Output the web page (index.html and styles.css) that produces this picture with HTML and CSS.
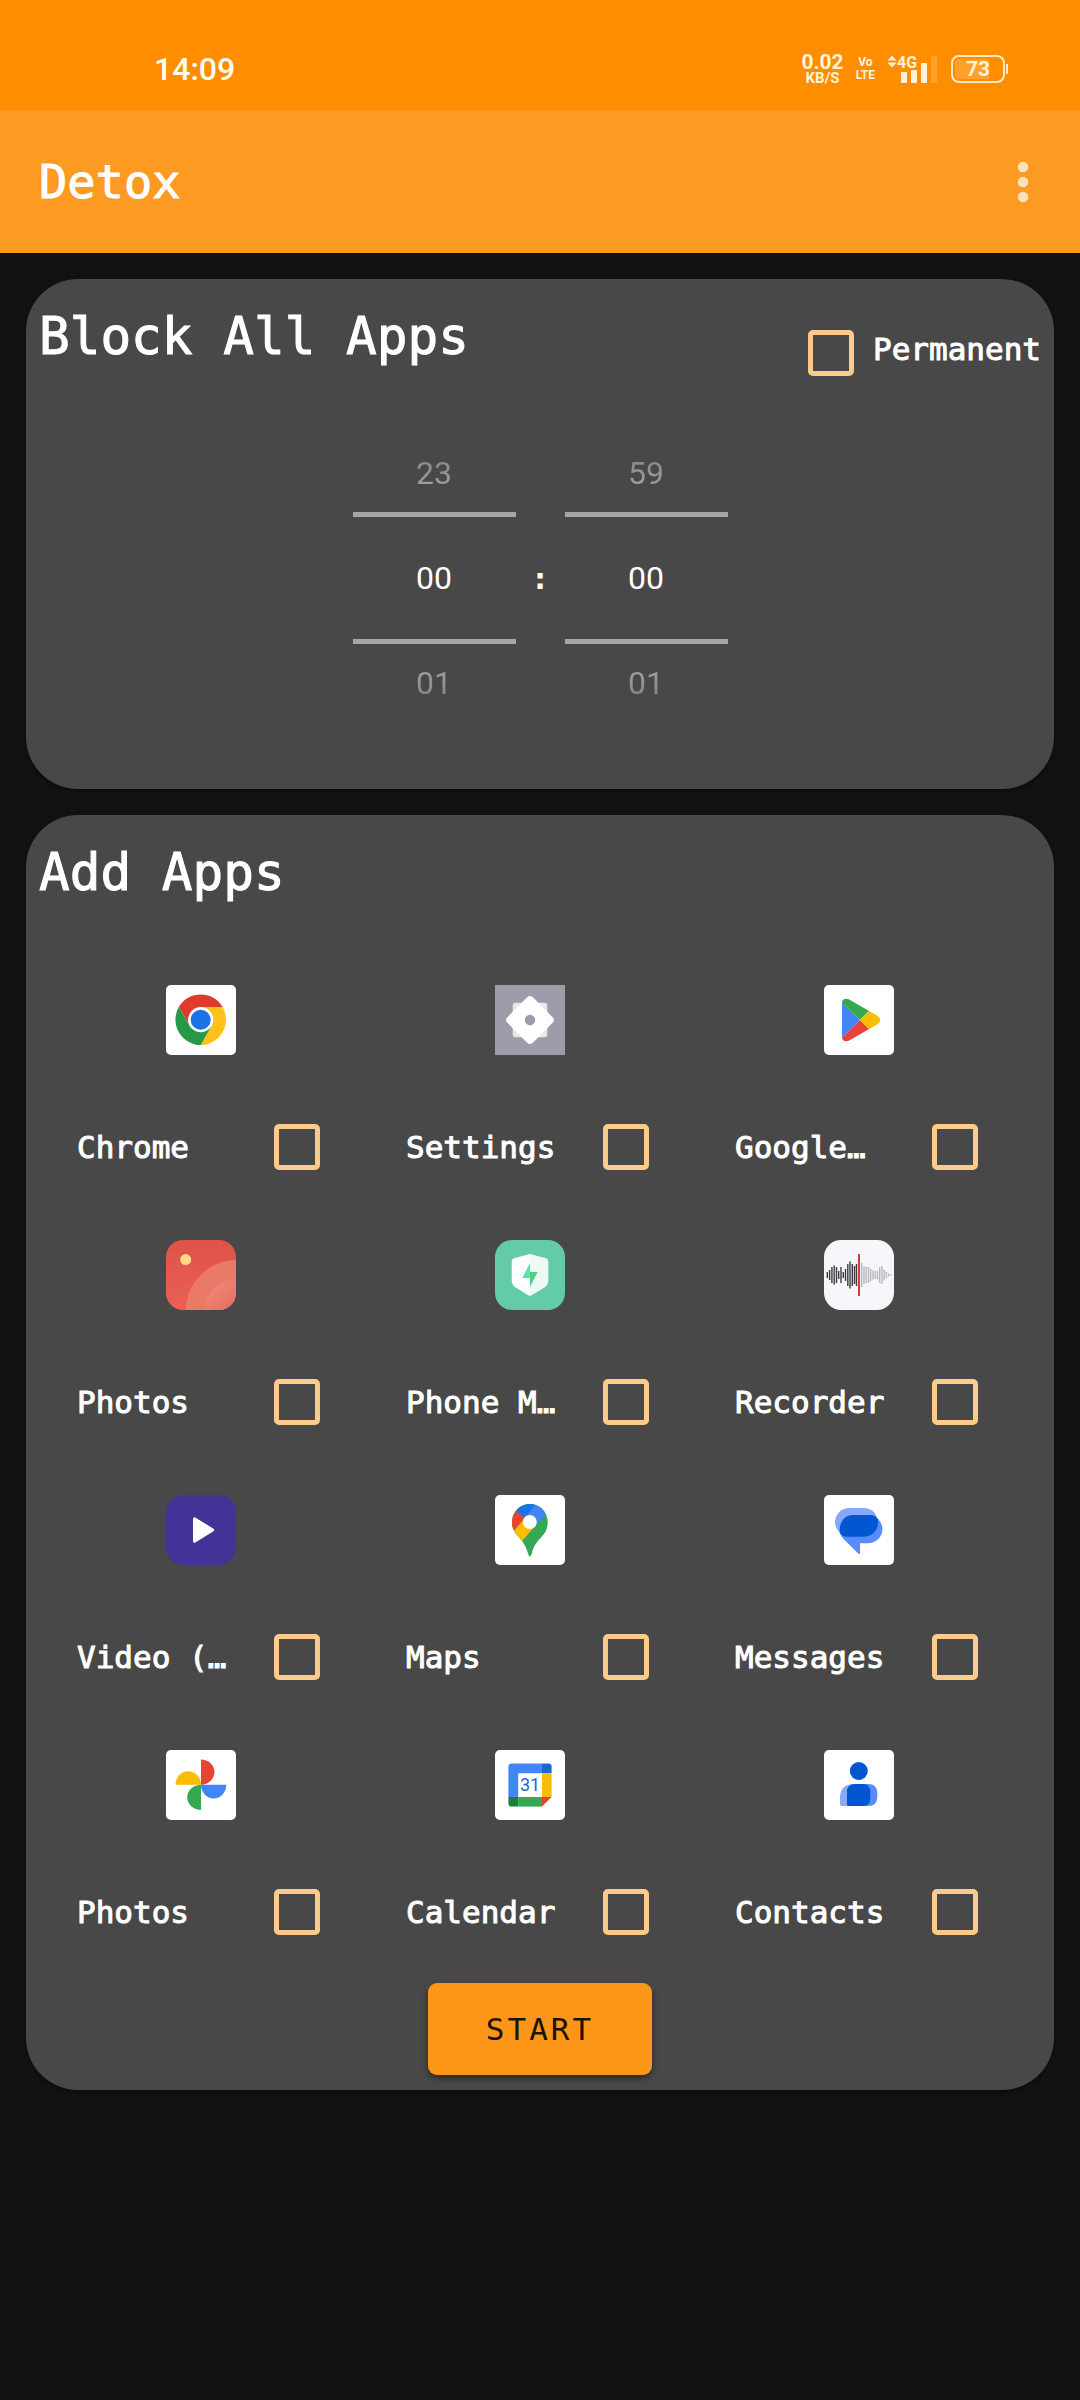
FILE: index.html
```html
<!DOCTYPE html>
<html lang="en">
<head>
<meta charset="utf-8">
<meta name="viewport" content="width=device-width, initial-scale=1">
<title>Detox</title>
<link rel="stylesheet" href="styles.css">
</head>
<body>
<div class="status-bar">
  <span class="clock">14:09</span>
  <div class="status-icons">
    <div class="net-speed"><span class="speed-value">0.02</span><span class="speed-unit">KB/S</span></div>
    <div class="volte"><span>Vo</span><span>LTE</span></div>
    <svg class="signal" viewBox="0 0 52 34" aria-label="4G signal">
      <path fill="currentColor" d="M5 3.500L9.500 8.500H.5zM5 15.500L.5 10.500H9.500z"/>
      <text class="signal-text" x="10" y="16">4G</text>
      <g fill="currentColor"><rect x="14" y="20" width="6" height="11" rx="1"/><rect x="24" y="18" width="6" height="13" rx="1"/><rect x="34" y="11" width="6" height="20" rx="1"/><rect x="44" y="4" width="6" height="27" rx="1" opacity=".2"/></g>
    </svg>
    <div class="battery"><span class="battery-level">73</span></div>
  </div>
</div>

<header class="toolbar">
  <h1 class="toolbar-title">Detox</h1>
  <button class="menu-button" type="button" aria-label="More options">
    <svg class="menu-dots" viewBox="0 0 12 42"><circle cx="6" cy="6" r="5.300"/><circle cx="6" cy="21" r="5.300"/><circle cx="6" cy="36" r="5.300"/></svg>
  </button>
</header>

<main class="content">
  <section class="card block-card">
    <div class="card-head">
      <h2 class="card-title">Block All Apps</h2>
      <label class="permanent"><input class="check" type="checkbox"><span class="label-text">Permanent</span></label>
    </div>
    <div class="time-picker">
      <div class="picker">
        <button class="picker-step picker-prev" type="button">23</button>
        <input class="picker-value" type="text" value="00" size="2" aria-label="Hours">
        <button class="picker-step picker-next" type="button">01</button>
      </div>
      <span class="picker-colon">:</span>
      <div class="picker">
        <button class="picker-step picker-prev" type="button">59</button>
        <input class="picker-value" type="text" value="00" size="2" aria-label="Minutes">
        <button class="picker-step picker-next" type="button">01</button>
      </div>
    </div>
  </section>

  <section class="card apps-card">
    <div class="card-head"><h2 class="card-title">Add Apps</h2></div>
    <div class="app-grid">
      <label class="app">
        <svg class="app-icon" viewBox="0 0 70 70">
          <rect width="70" height="70" rx="5" fill="#fff"/>
          <path fill="#e03a2d" d="M12.800 22.100A25.300 25.300 0 0 1 56.600 22.100H34.700L23.900 41z"/>
          <path fill="#fdc11a" d="M56.600 22.100A25.300 25.300 0 0 1 34.700 60L45.500 41 34.700 22.100z"/>
          <path fill="#279847" d="M34.700 60A25.300 25.300 0 0 1 12.800 22.100L23.900 41H45.500z"/>
          <circle cx="34.700" cy="34.700" r="12.600" fill="#fff"/><circle cx="34.700" cy="34.700" r="10" fill="#1a73e8"/>
        </svg>
        <span class="app-row"><span class="label-text">Chrome</span><input class="check" type="checkbox"></span>
      </label>
      <label class="app">
        <svg class="app-icon" viewBox="0 0 70 70">
          <rect width="70" height="70" fill="#9d9cab"/>
          <rect x="17.700" y="17.700" width="34.600" height="34.600" rx="3" fill="#e8e7eb"/>
          <rect x="17" y="17" width="36" height="36" rx="4" fill="#fff" transform="rotate(45 35 35)"/>
          <circle cx="35" cy="35" r="5.200" fill="#9d9cab"/>
        </svg>
        <span class="app-row"><span class="label-text">Settings</span><input class="check" type="checkbox"></span>
      </label>
      <label class="app">
        <svg class="app-icon" viewBox="0 0 70 70">
          <defs><clipPath id="play-shape"><path d="M18 18Q18 13.800 22.500 13.800Q24 13.800 26 15L53 30.500Q56.300 32.500 56.300 35T53 39.500L26 55Q24 56.200 22.500 56.200Q18 56.200 18 52z"/></clipPath></defs>
          <rect width="70" height="70" rx="5" fill="#fff"/>
          <g clip-path="url(#play-shape)"><path fill="#4285f4" d="M17 16.500L36 35 17 53.500z"/><path fill="#34a853" d="M17 16.500V10H30L45.500 25.500 36 35z"/><path fill="#ea4335" d="M17 53.500V60H30L45.500 44.500 36 35z"/><path fill="#fbbc04" d="M36 35L46 25H60V45H46z"/></g>
        </svg>
        <span class="app-row"><span class="label-text">Google…</span><input class="check" type="checkbox"></span>
      </label>
      <label class="app">
        <svg class="app-icon" viewBox="0 0 70 70">
          <defs>
            <linearGradient id="gallery-bg" x2="0" y2="1"><stop stop-color="#e05248"/><stop offset="1" stop-color="#ea6057"/></linearGradient>
            <linearGradient id="gallery-arc" x2="1" y2="1"><stop stop-color="#ef917c"/><stop offset=".5" stop-color="#e76a60"/></linearGradient>
            <clipPath id="gallery-shape"><rect width="70" height="70" rx="17"/></clipPath>
          </defs>
          <g clip-path="url(#gallery-shape)"><rect width="70" height="70" fill="url(#gallery-bg)"/><circle cx="70" cy="70" r="50" fill="#eb7968"/><circle cx="70" cy="70" r="31" fill="url(#gallery-arc)"/></g>
          <circle cx="19.700" cy="19.600" r="5.500" fill="#fedb88"/>
        </svg>
        <span class="app-row"><span class="label-text">Photos</span><input class="check" type="checkbox"></span>
      </label>
      <label class="app">
        <svg class="app-icon" viewBox="0 0 70 70">
          <rect width="70" height="70" rx="17" fill="#63cbaa"/>
          <path fill="#fff" d="M35 14L19 18.300Q16.700 19 16.700 21.500V41Q16.700 44.500 19.500 46.700L32.500 54.800Q34 55.800 35 55.800z"/>
          <path fill="#edf9f5" d="M35 14L51 18.300Q53.300 19 53.300 21.500V41Q53.300 44.500 50.500 46.700L37.500 54.800Q36 55.800 35 55.800z"/>
          <path fill="#55e6a5" d="M35 22.700V38H27.300z"/><path fill="#50d083" d="M35 32H42.700L35 47z"/>
        </svg>
        <span class="app-row"><span class="label-text">Phone M…</span><input class="check" type="checkbox"></span>
      </label>
      <label class="app">
        <svg class="app-icon" viewBox="0 0 70 70">
          <rect width="70" height="70" rx="17" fill="#f7f6fb"/>
          <path stroke="#3b3b3e" stroke-width="1.400" d="M3.300 32v6M5.600 30v10M7.900 27v16M10.200 25.500v19M12.500 27v16M14.700 31v8M17 27v16M19.300 32v6M21.500 29v12M23.800 24v22M26 21.500v27M28.300 24v22M30.500 26v18M32.500 24v22"/>
          <path stroke="#b9b9bd" stroke-width="1.400" d="M37.700 23v24M40 26v18M42.200 27v16M44.500 27v16M46.700 29v12M49 30.500v9M51.200 31v8M53.500 30.500v9M55.700 27v16M58 26v18M60.200 29.500v11M62.400 32v6M64.700 33.500v3M67 34.300v1.400"/>
          <path stroke="#dc3545" stroke-width="2" d="M35 14v42"/>
        </svg>
        <span class="app-row"><span class="label-text">Recorder</span><input class="check" type="checkbox"></span>
      </label>
      <label class="app">
        <svg class="app-icon" viewBox="0 0 70 70">
          <rect width="70" height="70" rx="17" fill="#443397"/>
          <path fill="#fff" stroke="#fff" stroke-width="3" stroke-linejoin="round" d="M28.500 23.700L46.700 35 28.500 46.300z"/>
        </svg>
        <span class="app-row"><span class="label-text">Video (…</span><input class="check" type="checkbox"></span>
      </label>
      <label class="app">
        <svg class="app-icon" viewBox="0 0 70 70">
          <defs><clipPath id="pin-shape"><path d="M34.800 9C45 9 52.700 17 52.700 27C52.700 42 41 42 37 58Q34.800 65 32.800 58C29 42 17 41 17 27C17 17 25 9 34.800 9z"/></clipPath></defs>
          <rect width="70" height="70" rx="5" fill="#fff"/>
          <g clip-path="url(#pin-shape)"><rect x="10" y="5" width="50" height="60" fill="#34a853"/><path fill="#4285f4" d="M41 8L53 17.500 36 36 29 23z"/><path fill="#1a73e8" d="M18 13.500V5H44L29.500 23.500z"/><path fill="#ea4335" d="M15 11L21.300 16.300 34.800 27 15 41z"/><path fill="#fbbc04" d="M17 38L29.500 23.500 41 30 24.500 49z"/></g>
          <circle cx="34.800" cy="27" r="7" fill="#fff"/>
        </svg>
        <span class="app-row"><span class="label-text">Maps</span><input class="check" type="checkbox"></span>
      </label>
      <label class="app">
        <svg class="app-icon" viewBox="0 0 70 70">
          <rect width="70" height="70" rx="5" fill="#fff"/>
          <rect x="11" y="13" width="43" height="28.500" rx="14.200" fill="#87a9fb"/>
          <path fill="#598bfb" d="M29 20H44.500A13.800 14 0 0 1 44.500 48.200H36V58.500Q35.600 59.600 34.500 58.700L20 44.500Q15.500 40 15.500 34C15.500 26 21 20 29 20z"/>
          <path fill="#0057d0" d="M29 20H48.500Q52 21 54 24.500V27C54 35.500 48 41.700 39.500 41.700H22Q17.500 41 16 38C14.500 29 20 20 29 20z"/>
        </svg>
        <span class="app-row"><span class="label-text">Messages</span><input class="check" type="checkbox"></span>
      </label>
      <label class="app">
        <svg class="app-icon" viewBox="0 0 70 70">
          <rect width="70" height="70" rx="5" fill="#fff"/>
          <path fill="#ea4335" d="M35 9.500A13.500 12.600 0 0 1 35 34.700z"/><path fill="#fbbc04" d="M9.500 34.700A12.750 13.500 0 0 1 35 34.700z"/><path fill="#4285f4" d="M35 34.700H60.300A12.650 13.800 0 0 1 35 34.700z"/><path fill="#34a853" d="M35 34.700V60A13.800 12.650 0 0 1 35 34.700z"/>
        </svg>
        <span class="app-row"><span class="label-text">Photos</span><input class="check" type="checkbox"></span>
      </label>
      <label class="app">
        <svg class="app-icon" viewBox="0 0 70 70">
          <rect width="70" height="70" rx="5" fill="#fff"/>
          <path fill="#4285f4" d="M16.500 13.400H47V23.200H23.200V47H13.400V16.500Q13.400 13.400 16.500 13.400z"/>
          <path fill="#1967d2" d="M47 13.400H53.500Q56.600 13.400 56.600 16.500V23.200H47z"/>
          <path fill="#fbbc04" d="M47 23.200H56.600V47H47z"/><path fill="#34a853" d="M23.200 47H47V56.600H23.200z"/>
          <path fill="#188038" d="M13.400 47H23.200V56.600H16.500Q13.400 56.600 13.400 53.500z"/><path fill="#ea4335" d="M47 47H56.600L47 56.600z"/>
          <text class="calendar-day" x="35" y="41" text-anchor="middle">31</text>
        </svg>
        <span class="app-row"><span class="label-text">Calendar</span><input class="check" type="checkbox"></span>
      </label>
      <label class="app">
        <svg class="app-icon" viewBox="0 0 70 70">
          <rect width="70" height="70" rx="5" fill="#fff"/>
          <circle cx="34.800" cy="21" r="9" fill="#0057d0"/>
          <path fill="#87a9fb" d="M30 34H38V56H18Q16 56 16 54V48Q16 34 30 34z"/>
          <path fill="#598bfb" d="M36 34H44Q53.300 34 53.300 43V47Q53.300 56 44 56H36z"/>
          <path fill="#0057d0" d="M31 34H38.500Q46.300 34 46.300 42V48Q46.300 56 38.500 56H24.500Q23 56 23 54.500V42Q23 34 31 34z"/>
        </svg>
        <span class="app-row"><span class="label-text">Contacts</span><input class="check" type="checkbox"></span>
      </label>
    </div>
    <button class="start-button" type="button">START</button>
  </section>
</main>
</body>
</html>
```
FILE: styles.css
```css
*,
*::before,
*::after {
  box-sizing: border-box;
}

body {
  margin: 0;
  min-height: 100vh;
  background: #121212;
  color: #fff;
  font-family: "DejaVu Sans Mono", monospace;
}

button,
input {
  margin: 0;
  padding: 0;
  border: 0;
  background: none;
  color: inherit;
  font-family: inherit;
}

svg {
  display: block;
}

/* Status bar */
.status-bar {
  display: flex;
  justify-content: space-between;
  align-items: center;
  height: 110px;
  padding: 28px 75px 0 154px;
  background: #fe8e00;
  color: #fff3dc;
  font-family: Roboto, sans-serif;
}

.clock {
  font-size: 32px;
  line-height: 40px;
  font-weight: 500;
  color: #fffdf0;
}

.status-icons {
  display: flex;
  align-items: center;
  gap: 12px;
  font-family: Roboto, sans-serif;
  font-weight: 700;
}

.net-speed,
.volte {
  display: flex;
  flex-direction: column;
  align-items: center;
}

.speed-value {
  font-size: 21px;
  line-height: 18px;
}

.speed-unit {
  font-size: 15px;
  line-height: 15px;
}

.volte {
  font-size: 12px;
  line-height: 13px;
}

.signal {
  width: 52px;
  height: 34px;
}

.signal-text {
  fill: currentColor;
  font: 700 16px Roboto, sans-serif;
}

.battery {
  position: relative;
  display: flex;
  width: 54px;
  height: 28px;
  padding: 2px;
  border: 2px solid #ffe9c4;
  border-radius: 8px;
}

.battery::after {
  content: "";
  position: absolute;
  right: -5px;
  top: 7px;
  width: 2px;
  height: 10px;
  background: #ffe9c4;
}

.battery-level {
  flex: 1;
  border-radius: 4px;
  background: linear-gradient(90deg, #ffa029 73%, transparent 73%);
  font-size: 21px;
  line-height: 20px;
  text-align: center;
}

/* Toolbar */
.toolbar {
  display: flex;
  justify-content: space-between;
  align-items: center;
  height: 143px;
  padding: 0 27px 0 39px;
  background: #fc9a22;
}

.toolbar-title {
  margin: 0;
  font-size: 47px;
  line-height: 64px;
  font-weight: 400;
  -webkit-text-stroke: 1px currentColor;
}

.menu-button {
  display: flex;
  justify-content: center;
  width: 60px;
}

.menu-dots {
  width: 12px;
  height: 42px;
  fill: #fee1bb;
}

/* Cards */
.content {
  display: flex;
  flex-direction: column;
  gap: 26px;
  padding: 26px;
}

.card {
  border-radius: 52px;
  background: #484848;
  box-shadow: 0 2px 5px #0006;
}

.card-head {
  display: flex;
  justify-content: space-between;
  padding: 26px 13px 0;
}

.card-title {
  margin: 0;
  font-size: 51px;
  line-height: 64px;
  font-weight: 400;
  -webkit-text-stroke: 1px currentColor;
}

.label-text {
  font-size: 31px;
  line-height: 38px;
  white-space: nowrap;
  -webkit-text-stroke: 1px currentColor;
}

.check {
  flex: none;
  appearance: none;
  width: 46px;
  height: 46px;
  border: 5px solid #fecb8c;
  border-radius: 5px;
}

.check:checked {
  background: #fecb8c;
}

.permanent {
  display: flex;
  align-items: flex-start;
  gap: 19px;
  padding-top: 25px;
}

/* Time picker */
.time-picker {
  display: flex;
  justify-content: center;
  align-items: center;
  padding: 58px 0 67px;
}

.picker {
  display: flex;
  flex-direction: column;
  width: 163px;
  font-family: Roboto, sans-serif;
}

.picker-step,
.picker-value {
  width: 100%;
  font-size: 32px;
  line-height: 40px;
  text-align: center;
}

.picker-step {
  height: 78px;
  background-clip: text;
  -webkit-background-clip: text;
  color: transparent;
}

.picker-prev {
  background-image: linear-gradient(#707070, #b8b8b8);
}

.picker-next {
  background-image: linear-gradient(#b8b8b8, #707070);
}

.picker-value {
  height: 132px;
  border-top: 5px solid #a6a6a6;
  border-bottom: 5px solid #a6a6a6;
}

.picker-colon {
  width: 49px;
  font-size: 31px;
  line-height: 40px;
  font-weight: 700;
  text-align: center;
}

/* Apps */
.apps-card {
  padding-bottom: 15px;
}

.app-grid {
  display: grid;
  grid-template-columns: repeat(3, minmax(0, 1fr));
  padding: 54px 31px 0 10px;
}

.app {
  display: flex;
  flex-direction: column;
  align-items: center;
  gap: 50px;
  padding: 26px 0 25px;
}

.app-icon {
  width: 70px;
  height: 70px;
}

.app-row {
  display: flex;
  align-self: stretch;
  justify-content: space-between;
  align-items: center;
  height: 84px;
  padding: 0 45px 0 41px;
}

.start-button {
  display: block;
  width: 224px;
  height: 92px;
  margin: 4px auto 0;
  border-radius: 9px;
  background: #fc9618;
  box-shadow: 0 3px 6px #0007;
  color: #1b1203;
  font-size: 31px;
  line-height: 40px;
  letter-spacing: 3px;
}

.calendar-day {
  fill: #1967d2;
  font: 400 18px Roboto, sans-serif;
}
```
